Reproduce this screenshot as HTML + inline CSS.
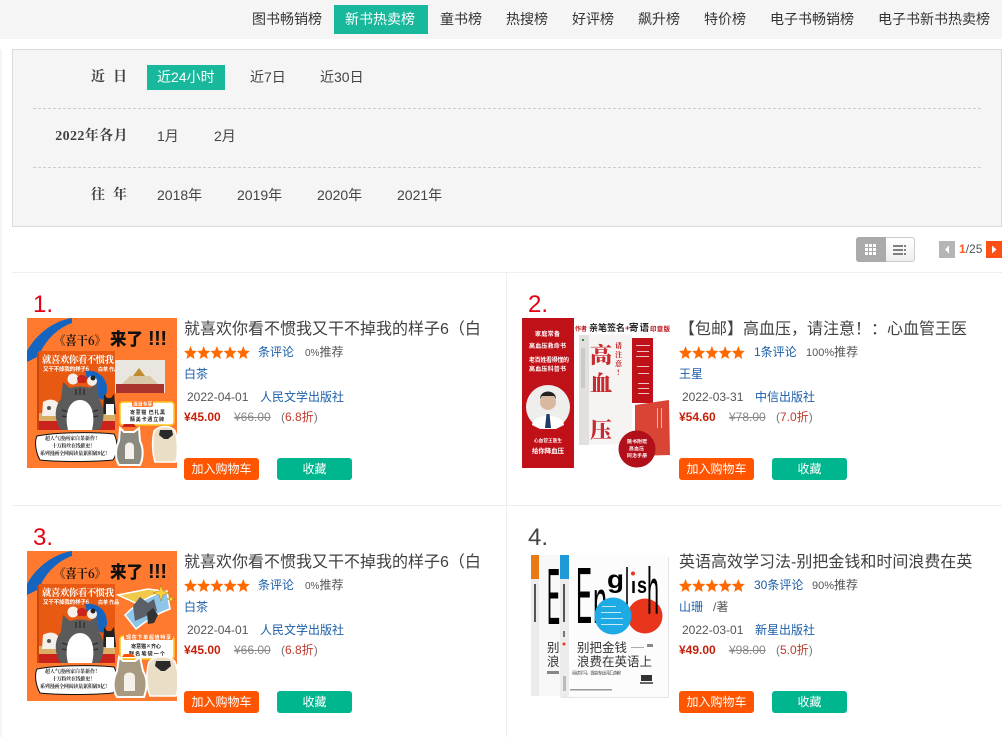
<!DOCTYPE html>
<html lang="zh-CN">
<head>
<meta charset="utf-8">
<title>新书热卖榜</title>
<style>
*{box-sizing:border-box}
html,body{margin:0;padding:0;background:#fff}
body{width:1008px;height:737px;overflow:hidden;position:relative;font-family:"Liberation Sans","WenQuanYi Zen Hei","Noto Sans CJK SC",sans-serif;color:#444}
.a{position:absolute;white-space:nowrap;line-height:20px;height:20px}
.n{font-size:14px;color:#333;top:9px}
.f{font-size:14px;color:#444}
.l{font-family:"Liberation Serif","Noto Serif CJK SC",serif;font-weight:700;font-size:14px;color:#404040;text-align:right;width:100px;left:28px}
.card{position:absolute;width:495px;height:233px}
.rank{font-size:24px;line-height:28px;height:28px;top:291px;left:33px;color:#e60012}
.cover{position:absolute;left:27px;top:318px;width:150px;height:150px;display:block}
.cover text{font-family:"Noto Sans CJK SC",sans-serif}
.cover text.se{font-family:"Noto Serif CJK SC",serif}
.cover text.la{font-family:"Liberation Sans",sans-serif}
.title{left:184px;top:320px;font-size:16px;color:#404040}
.lk{color:#1a5ea8;font-size:12px}
.g{color:#555;font-size:12px}
.stars{position:absolute;left:184px;top:346px;width:66px;height:14px;display:block}
.btn{position:absolute;top:458px;height:22px;width:75px;border-radius:3px;color:#fff;font-size:12px;line-height:22px;text-align:center}
.b1{left:184px;background:#ff5400}
.b2{left:277px;background:#00b68e}
</style>
</head>
<body>
<div style="position:absolute;left:0;top:0;width:1002px;height:39px;background:#f5f5f5"></div>
<div style="position:absolute;left:334px;top:5px;width:94px;height:29px;background:#17b89c"></div>
<div class="a n" style="left:252px">图书畅销榜</div>
<div class="a n" style="left:345px;color:#fff">新书热卖榜</div>
<div class="a n" style="left:440px">童书榜</div>
<div class="a n" style="left:506px">热搜榜</div>
<div class="a n" style="left:572px">好评榜</div>
<div class="a n" style="left:638px">飙升榜</div>
<div class="a n" style="left:704px">特价榜</div>
<div class="a n" style="left:770px">电子书畅销榜</div>
<div class="a n" style="left:878px">电子书新书热卖榜</div>

<div style="position:absolute;left:0;top:49px;width:2px;height:688px;background:#f5f5f5"></div>
<div style="position:absolute;left:12px;top:49px;width:990px;height:178px;background:#f5f5f5;border:1px solid #d9d9d9"></div>
<div style="position:absolute;left:33px;top:108px;width:948px;border-top:1px dashed #ccc"></div>
<div style="position:absolute;left:33px;top:167px;width:948px;border-top:1px dashed #ccc"></div>

<div class="a l" style="top:68px;left:27px;word-spacing:.5px">近&nbsp;&nbsp;日</div>
<div style="position:absolute;left:147px;top:65px;width:78px;height:25px;background:#17b89c"></div>
<div class="a f" style="left:157px;top:67px;color:#fff">近24小时</div>
<div class="a f" style="left:250px;top:67px">近7日</div>
<div class="a f" style="left:320px;top:67px">近30日</div>
<div class="a l" style="top:127px;letter-spacing:.4px">2022年各月</div>
<div class="a f" style="left:157px;top:126px">1月</div>
<div class="a f" style="left:214px;top:126px">2月</div>
<div class="a l" style="top:186px;left:27px;word-spacing:.5px">往&nbsp;&nbsp;年</div>
<div class="a f" style="left:157px;top:185px">2018年</div>
<div class="a f" style="left:237px;top:185px">2019年</div>
<div class="a f" style="left:317px;top:185px">2020年</div>
<div class="a f" style="left:397px;top:185px">2021年</div>

<!-- view toggle -->
<div style="position:absolute;left:856px;top:237px;width:59px;height:25px;border:1px solid #ccc;border-radius:3px;background:linear-gradient(#fff,#eee)"></div>
<div style="position:absolute;left:856px;top:237px;width:30px;height:25px;background:#aaa;border-radius:3px 0 0 3px"></div>
<svg style="position:absolute;left:856px;top:237px" width="59" height="25">
<g fill="#fff"><rect x="9" y="7" width="3" height="3"/><rect x="13" y="7" width="3" height="3"/><rect x="17" y="7" width="3" height="3"/><rect x="9" y="11" width="3" height="3"/><rect x="13" y="11" width="3" height="3"/><rect x="17" y="11" width="3" height="3"/><rect x="9" y="15" width="3" height="3"/><rect x="13" y="15" width="3" height="3"/><rect x="17" y="15" width="3" height="3"/></g>
<g fill="#808080"><rect x="37" y="8" width="10" height="2"/><rect x="48" y="8" width="2" height="2"/><rect x="37" y="12" width="10" height="2"/><rect x="48" y="12" width="2" height="2"/><rect x="37" y="16" width="10" height="2"/><rect x="48" y="16" width="2" height="2"/></g>
</svg>
<!-- pager -->
<svg style="position:absolute;left:939px;top:241px" width="16" height="17"><rect width="16" height="17" fill="#b5b5b5"/><path d="M10 4.5v8l-4-4z" fill="#fff"/></svg>
<div class="a" style="left:959px;top:239px;font-size:12px;color:#555"><b style="color:#ff5a1f;font-weight:700">1</b>/25</div>
<svg style="position:absolute;left:986px;top:241px" width="16" height="17"><rect width="16" height="17" fill="#ff4f14"/><path d="M6 4.5v8l4.5-4z" fill="#fff"/></svg>

<!-- grid lines -->
<div style="position:absolute;left:12px;top:272px;width:990px;border-top:1px solid #eee"></div>
<div style="position:absolute;left:12px;top:505px;width:990px;border-top:1px solid #eee"></div>
<div style="position:absolute;left:506px;top:272px;height:465px;border-left:1px solid #eee"></div>

<!-- Card 1 -->
<div class="card" style="left:0;top:0">
<div class="a rank">1.</div>
<svg class="cover" viewBox="0 0 150 150">
<rect width="150" height="150" fill="#ff7a2e"/>
<path d="M45 0C27 3 10 15 0 33V44L12 38C17 24 30 10 45 5z" fill="#1565c0"/>
<text class="se" x="27" y="27" font-size="12.5" font-weight="700" fill="#111" textLength="52" lengthAdjust="spacingAndGlyphs">《喜干6》</text>
<text x="83" y="27" font-size="17" font-weight="900" fill="#111" textLength="33" lengthAdjust="spacingAndGlyphs">来了</text>
<text class="la" x="121" y="27" font-size="20" font-weight="700" fill="#111" textLength="19">!!!</text>
<rect x="10" y="34" width="3" height="78" fill="#c9470c"/>
<rect x="12" y="33" width="76" height="79" fill="#e85a12"/>
<text class="se" x="15" y="45" font-size="9.5" font-weight="700" fill="#fff" textLength="72">就喜欢你看不惯我</text>
<text x="16" y="53" font-size="5.5" font-weight="700" fill="#fff" textLength="46">又干不掉我的样子6</text>
<text x="71" y="53" font-size="5" font-weight="700" fill="#fff">白茶 作品</text>
<path d="M58 53c12-2 22 6 22 18 0 5-2 9-5 11l-5-3c3-8 0-16-10-18z" fill="#1565c0"/>
<rect x="12" y="95" width="76" height="8" fill="#dbae66"/><rect x="12" y="103" width="76" height="9" fill="#c9231c"/>
<path d="M16 84c6-4 14-3 16 3v11H15z" fill="#f5f0ea"/><circle cx="22" cy="90" r="2" fill="#555"/>
<path d="M77 76l3 4h4l3-4 2 20H76z" fill="#222"/><path d="M79 86h8v11h-8z" fill="#fff"/>
<path d="M36 64l7 6c7-2 14-2 20 0l7-5 2 16c6 8 6 22 0 31H34c-7-9-7-23 0-31z" fill="#5b5b5b"/>
<g stroke="#2c2c2c" stroke-width="1.3" fill="none"><path d="M49 71v6M53 70v7M57 71v6M35 92l6 2M35 98l6 1M71 92l-6 2M71 98l-6 1"/></g>
<path d="M41 112c-4-16 1-30 12-30s16 14 12 30z" fill="#fff"/>
<circle cx="46" cy="61" r="5.5" fill="#f5f0ea"/><path d="M50 60c2-4 8-4 10 0l-1 5h-8z" fill="#c9231c"/><circle cx="65" cy="63" r="5" fill="#f5f0ea"/><circle cx="66" cy="60" r="2.5" fill="#222"/>
<rect x="88" y="42" width="50" height="33" fill="#e9e6df"/>
<rect x="89" y="66" width="48" height="9" fill="#a8322c"/><path d="M95 66l8-8h20l8 8z" fill="#d8c7a8"/><path d="M106 58l6-8 6 8z" fill="#c08a2a"/>
<rect x="93" y="84" width="54" height="23" rx="3" fill="#fff" stroke="#fcc419" stroke-width="1.5"/>
<rect x="105" y="81" width="21" height="8" rx="2" fill="#ff7a2e"/>
<text x="106" y="87.5" font-size="4.8" fill="#fff" font-weight="700">当当专享</text>
<text x="103" y="96" font-size="5" font-weight="700" fill="#222" textLength="35">寄意猫 巴扎黑</text>
<text x="103" y="103" font-size="5" font-weight="700" fill="#222" textLength="34">精美卡通立牌</text>
<path d="M10 118c20-4 58-4 77-2 4 7 4 19-1 26-20 2-55 2-73 0-4-7-6-18-3-24z" fill="#fff" stroke="#111" stroke-width="1"/>
<text class="se" x="18" y="122" font-size="5" font-weight="700" fill="#222" textLength="55">超人气漫画家白茶新作！</text>
<text class="se" x="25" y="129.5" font-size="5" font-weight="700" fill="#222" textLength="43">十万粉丝在线催更！</text>
<text class="se" x="13" y="137" font-size="5" font-weight="700" fill="#222" textLength="70">系列漫画全网阅读量累积破8亿！</text>
<path d="M93 110l4 4 10 0 5-4 1 13c4 8 3 18 0 24H92c-4-6-4-16 0-24z" fill="#8a8a80" stroke="#fff" stroke-width="2"/>
<path d="M98 129c0-6 9-6 9 0v12h-9z" fill="#f5f0ea"/>
<path d="M95 109h14l-2-3h-10z" fill="#c9231c"/>
<path d="M127 113c6-6 17-6 21 0 3 8 3 24 1 31h-21c-3-10-3-22-1-31z" fill="#eadfc6" stroke="#fff" stroke-width="1.5"/>
<path d="M133 112h12l1 5-5 4h-4l-5-4z" fill="#2a2a2a"/>
</svg>
<div class="a title">就喜欢你看不惯我又干不掉我的样子6（白</div>
<svg class="stars" viewBox="0 0 66 14"><g fill="#ff6a00"><polygon points="6.5,0 8.3,4.6 13,5 9.4,8.2 10.5,13 6.5,10.4 2.5,13 3.6,8.2 0,5 4.7,4.6"/><polygon transform="translate(13.2 0)" points="6.5,0 8.3,4.6 13,5 9.4,8.2 10.5,13 6.5,10.4 2.5,13 3.6,8.2 0,5 4.7,4.6"/><polygon transform="translate(26.4 0)" points="6.5,0 8.3,4.6 13,5 9.4,8.2 10.5,13 6.5,10.4 2.5,13 3.6,8.2 0,5 4.7,4.6"/><polygon transform="translate(39.6 0)" points="6.5,0 8.3,4.6 13,5 9.4,8.2 10.5,13 6.5,10.4 2.5,13 3.6,8.2 0,5 4.7,4.6"/><polygon transform="translate(52.8 0)" points="6.5,0 8.3,4.6 13,5 9.4,8.2 10.5,13 6.5,10.4 2.5,13 3.6,8.2 0,5 4.7,4.6"/></g></svg>
<div class="a lk" style="left:258px;top:342px">条评论</div>
<div class="a g" style="left:305px;top:342px"><span style="font-size:10px">0%</span>推荐</div>
<div class="a lk" style="left:184px;top:364px">白茶</div>
<div class="a g" style="left:187px;top:387px">2022-04-01</div>
<div class="a lk" style="left:260px;top:387px">人民文学出版社</div>
<div class="a" style="left:184px;top:407px;font-size:12px;font-weight:700;color:#c7200a">¥45.00</div>
<div class="a" style="left:234px;top:407px;font-size:12px;color:#888;text-decoration:line-through">¥66.00</div>
<div class="a" style="left:281px;top:407px;font-size:12px;color:#777">(<span style="color:#c0392b">6.8折</span>)</div>
<div class="btn b1">加入购物车</div>
<div class="btn b2">收藏</div>
</div>

<!-- Card 2 -->
<div class="card" style="left:495px;top:0">
<div class="a rank">2.</div>
<svg class="cover" viewBox="0 0 150 150">
<rect width="150" height="150" fill="#fff"/>
<rect width="52" height="150" fill="#c01018"/>
<g fill="#fff" font-size="6" font-weight="700">
<text x="13" y="18" textLength="25">家庭常备</text><text x="7" y="30" textLength="37">高血压救命书</text><text x="7" y="44" textLength="40">老百姓看得懂的</text><text x="7" y="53" textLength="37">高血压科普书</text>
<text x="12" y="124" font-size="4.6" textLength="28">心血管王医生</text><text x="10" y="135" font-size="6.5" textLength="32">给你降血压</text></g>
<circle cx="26" cy="89" r="22" fill="#eeeeec"/><circle cx="26" cy="84" r="8" fill="#d9b8a0"/><path d="M18 81c0-10 16-10 16 0l-2-3H20z" fill="#222"/>
<path d="M10 107c1-12 31-12 32 0l-8 4H18z" fill="#fff"/><path d="M24.5 96h3l1.500 14h-6z" fill="#1e3a66"/>
<text x="53" y="13" font-size="6" font-weight="700" fill="#c01018" textLength="12">作者</text>
<text x="67" y="13" font-size="9" font-weight="700" fill="#222" textLength="36">亲笔签名</text>
<text x="103" y="13" font-size="8" font-weight="700" fill="#c01018">+</text>
<text x="107" y="13" font-size="9.5" font-weight="700" fill="#222" textLength="20">寄语</text>
<text x="128" y="13" font-size="6.5" font-weight="700" fill="#c01018" textLength="20">印章版</text>
<path d="M57 17l53-1v110l-53 1z" fill="#f6f4f2"/><path d="M57 17h10v110H57z" fill="#e2e0de"/>
<rect x="60" y="21" width="2" height="2" fill="#2a8a3a"/><rect x="59" y="30" width="4" height="40" fill="#bbb" opacity=".6"/>
<g fill="#c01018" font-weight="900" opacity=".88"><text class="se" x="68" y="45" font-size="22">高</text><text class="se" x="68" y="73" font-size="22">血</text><text class="se" x="68" y="120" font-size="22">压</text></g>
<g fill="#c01018" font-size="7" font-weight="700"><text class="se" x="93" y="30">请</text><text class="se" x="93" y="39">注</text><text class="se" x="93" y="48">意</text><text class="se" x="95" y="57">!</text></g>
<rect x="110" y="20" width="21" height="65" fill="#c01018"/>
<g fill="#fff" opacity=".75"><rect x="114" y="27" width="14" height="1"/><rect x="115" y="33" width="12" height="1"/><rect x="114" y="38" width="13" height="1"/><rect x="115" y="48" width="12" height="1"/><rect x="116" y="55" width="11" height="1"/><rect x="116" y="65" width="11" height="1"/><rect x="116" y="70" width="11" height="1"/><rect x="116" y="75" width="11" height="1"/></g>
<path d="M113 87l34-5 1 55-35 1z" fill="#d84535"/>
<g fill="#fff" opacity=".6"><rect x="139" y="90" width="1" height="20"/><rect x="135" y="90" width="1" height="20"/></g>
<circle cx="115" cy="131" r="18.5" fill="#b10f1a"/>
<g fill="#fff" font-size="4.8" font-weight="700"><text x="105" y="125" textLength="20">随书附赠</text><text x="107" y="132" textLength="15">高血压</text><text x="105" y="139" textLength="20">同治手册</text></g>
</svg>
<div class="a title">【包邮】高血压，请注意！：心血管王医</div>
<svg class="stars" viewBox="0 0 66 14"><g fill="#ff6a00"><polygon points="6.5,0 8.3,4.6 13,5 9.4,8.2 10.5,13 6.5,10.4 2.5,13 3.6,8.2 0,5 4.7,4.6"/><polygon transform="translate(13.2 0)" points="6.5,0 8.3,4.6 13,5 9.4,8.2 10.5,13 6.5,10.4 2.5,13 3.6,8.2 0,5 4.7,4.6"/><polygon transform="translate(26.4 0)" points="6.5,0 8.3,4.6 13,5 9.4,8.2 10.5,13 6.5,10.4 2.5,13 3.6,8.2 0,5 4.7,4.6"/><polygon transform="translate(39.6 0)" points="6.5,0 8.3,4.6 13,5 9.4,8.2 10.5,13 6.5,10.4 2.5,13 3.6,8.2 0,5 4.7,4.6"/><polygon transform="translate(52.8 0)" points="6.5,0 8.3,4.6 13,5 9.4,8.2 10.5,13 6.5,10.4 2.5,13 3.6,8.2 0,5 4.7,4.6"/></g></svg>
<div class="a lk" style="left:259px;top:342px">1条评论</div>
<div class="a g" style="left:311px;top:342px"><span style="font-size:11px">100%</span>推荐</div>
<div class="a lk" style="left:184px;top:364px">王星</div>
<div class="a g" style="left:187px;top:387px">2022-03-31</div>
<div class="a lk" style="left:260px;top:387px">中信出版社</div>
<div class="a" style="left:184px;top:407px;font-size:12px;font-weight:700;color:#c7200a">¥54.60</div>
<div class="a" style="left:234px;top:407px;font-size:12px;color:#888;text-decoration:line-through">¥78.00</div>
<div class="a" style="left:281px;top:407px;font-size:12px;color:#777">(<span style="color:#c0392b">7.0折</span>)</div>
<div class="btn b1">加入购物车</div>
<div class="btn b2">收藏</div>
</div>

<!-- Card 3 -->
<div class="card" style="left:0;top:233px">
<div class="a rank">3.</div>
<svg class="cover" viewBox="0 0 150 150">
<rect width="150" height="150" fill="#ff7a2e"/>
<path d="M45 0C27 3 10 15 0 33V44L12 38C17 24 30 10 45 5z" fill="#1565c0"/>
<text class="se" x="27" y="27" font-size="12.5" font-weight="700" fill="#111" textLength="52" lengthAdjust="spacingAndGlyphs">《喜干6》</text>
<text x="83" y="27" font-size="17" font-weight="900" fill="#111" textLength="33" lengthAdjust="spacingAndGlyphs">来了</text>
<text class="la" x="121" y="27" font-size="20" font-weight="700" fill="#111" textLength="19">!!!</text>
<rect x="10" y="34" width="3" height="78" fill="#c9470c"/>
<rect x="12" y="33" width="76" height="79" fill="#e85a12"/>
<text class="se" x="15" y="45" font-size="9.5" font-weight="700" fill="#fff" textLength="72">就喜欢你看不惯我</text>
<text x="16" y="53" font-size="5.5" font-weight="700" fill="#fff" textLength="46">又干不掉我的样子6</text>
<text x="71" y="53" font-size="5" font-weight="700" fill="#fff">白茶 作品</text>
<path d="M58 53c12-2 22 6 22 18 0 5-2 9-5 11l-5-3c3-8 0-16-10-18z" fill="#1565c0"/>
<rect x="12" y="95" width="76" height="8" fill="#dbae66"/><rect x="12" y="103" width="76" height="9" fill="#c9231c"/>
<path d="M16 84c6-4 14-3 16 3v11H15z" fill="#f5f0ea"/><circle cx="22" cy="90" r="2" fill="#555"/>
<path d="M77 76l3 4h4l3-4 2 20H76z" fill="#222"/><path d="M79 86h8v11h-8z" fill="#fff"/>
<path d="M36 64l7 6c7-2 14-2 20 0l7-5 2 16c6 8 6 22 0 31H34c-7-9-7-23 0-31z" fill="#5b5b5b"/>
<g stroke="#2c2c2c" stroke-width="1.3" fill="none"><path d="M49 71v6M53 70v7M57 71v6M35 92l6 2M35 98l6 1M71 92l-6 2M71 98l-6 1"/></g>
<path d="M41 112c-4-16 1-30 12-30s16 14 12 30z" fill="#fff"/>
<circle cx="46" cy="61" r="5.5" fill="#f5f0ea"/><path d="M50 60c2-4 8-4 10 0l-1 5h-8z" fill="#c9231c"/><circle cx="65" cy="63" r="5" fill="#f5f0ea"/><circle cx="66" cy="60" r="2.5" fill="#222"/>
<path d="M91 44l30-6 15 2 2 16-14 3z" fill="#f0c84a" stroke="#fff" stroke-width="1.5"/>
<path d="M98 64c14-14 26-20 42-24l3 18c-12 4-24 12-34 20z" fill="#8fc6e8" stroke="#fff" stroke-width="1.5"/>
<path d="M106 55l7-9 8 6 6-4 3 12-13 6-9 4z" fill="#5a5f68"/>
<path d="M120 62l6-5 5 7-4 8-6 1z" fill="#333"/>
<path d="M134 34l2 6 6 2-6 2-2 6-2-6-6-2 6-2zM144 44l1 3 3 1-3 1-1 3-1-3-3-1 3-1z" fill="#ffcf3d" stroke="#8a6d00" stroke-width=".4"/>
<rect x="93" y="85" width="54" height="23" rx="3" fill="#fff" stroke="#fcc419" stroke-width="1.5"/>
<rect x="97" y="82" width="49" height="7" rx="2" fill="#ff7a2e"/>
<text x="99" y="87.8" font-size="5" fill="#fff" font-weight="700" textLength="45">现在下单超值特享</text>
<text x="104" y="97" font-size="5.2" font-weight="700" fill="#222" textLength="30">寄意猫×齐心</text>
<text x="102" y="104.5" font-size="5.2" font-weight="700" fill="#222" textLength="36">联名笔袋一个</text>
<path d="M10 118c20-4 58-4 77-2 4 7 4 19-1 26-20 2-55 2-73 0-4-7-6-18-3-24z" fill="#fff" stroke="#111" stroke-width="1"/>
<text class="se" x="18" y="122" font-size="5" font-weight="700" fill="#222" textLength="55">超人气漫画家白茶新作！</text>
<text class="se" x="25" y="129.5" font-size="5" font-weight="700" fill="#222" textLength="43">十万粉丝在线催更！</text>
<text class="se" x="13" y="137" font-size="5" font-weight="700" fill="#222" textLength="70">系列漫画全网阅读量累积破8亿！</text>
<path d="M92 106l4 4 12 0 5-4 3 14c5 8 4 18 1 26H90c-5-8-4-18 0-26z" fill="#a89a80" stroke="#fff" stroke-width="2"/>
<path d="M97 126c0-6 11-6 11 0v14H97z" fill="#f5f0ea"/>
<path d="M95 106h13l-2-3h-9z" fill="#ff5400"/>
<path d="M122 111c6-7 21-7 26 0 4 9 4 26 1 34h-26c-4-11-4-24-1-34z" fill="#eadfc6" stroke="#fff" stroke-width="1.5"/>
<path d="M129 110h14l1 5-6 5h-4l-6-5z" fill="#2a2a2a"/>
</svg>
<div class="a title">就喜欢你看不惯我又干不掉我的样子6（白</div>
<svg class="stars" viewBox="0 0 66 14"><g fill="#ff6a00"><polygon points="6.5,0 8.3,4.6 13,5 9.4,8.2 10.5,13 6.5,10.4 2.5,13 3.6,8.2 0,5 4.7,4.6"/><polygon transform="translate(13.2 0)" points="6.5,0 8.3,4.6 13,5 9.4,8.2 10.5,13 6.5,10.4 2.5,13 3.6,8.2 0,5 4.7,4.6"/><polygon transform="translate(26.4 0)" points="6.5,0 8.3,4.6 13,5 9.4,8.2 10.5,13 6.5,10.4 2.5,13 3.6,8.2 0,5 4.7,4.6"/><polygon transform="translate(39.6 0)" points="6.5,0 8.3,4.6 13,5 9.4,8.2 10.5,13 6.5,10.4 2.5,13 3.6,8.2 0,5 4.7,4.6"/><polygon transform="translate(52.8 0)" points="6.5,0 8.3,4.6 13,5 9.4,8.2 10.5,13 6.5,10.4 2.5,13 3.6,8.2 0,5 4.7,4.6"/></g></svg>
<div class="a lk" style="left:258px;top:342px">条评论</div>
<div class="a g" style="left:305px;top:342px"><span style="font-size:10px">0%</span>推荐</div>
<div class="a lk" style="left:184px;top:364px">白茶</div>
<div class="a g" style="left:187px;top:387px">2022-04-01</div>
<div class="a lk" style="left:260px;top:387px">人民文学出版社</div>
<div class="a" style="left:184px;top:407px;font-size:12px;font-weight:700;color:#c7200a">¥45.00</div>
<div class="a" style="left:234px;top:407px;font-size:12px;color:#888;text-decoration:line-through">¥66.00</div>
<div class="a" style="left:281px;top:407px;font-size:12px;color:#777">(<span style="color:#c0392b">6.8折</span>)</div>
<div class="btn b1">加入购物车</div>
<div class="btn b2">收藏</div>
</div>

<!-- Card 4 -->
<div class="card" style="left:495px;top:233px">
<div class="a rank" style="color:#444">4.</div>
<svg class="cover" viewBox="0 0 150 150">
<rect width="150" height="150" fill="#fff"/>
<rect x="9" y="4" width="32" height="141" fill="#f8f8f8"/>
<rect x="9" y="4" width="8" height="141" fill="#ececec"/><rect x="9" y="4" width="8" height="24" fill="#e87a16"/>
<rect x="12" y="33" width="2" height="38" fill="#555"/>
<text class="la" x="25" y="73" font-size="80" fill="#000" textLength="13" lengthAdjust="spacingAndGlyphs">E</text>
<text x="25" y="101" font-size="12.5" fill="#333">别</text>
<text x="25" y="115" font-size="12.5" fill="#333">浪</text>
<rect x="25" y="120" width="12" height="3" fill="#888"/>
<rect x="39" y="6" width="108" height="141" fill="#e4e4e4"/>
<rect x="38" y="4" width="108" height="142" fill="#fcfcfc"/>
<rect x="38" y="4" width="9" height="142" fill="#ececec"/><rect x="38" y="4" width="9" height="24" fill="#1f9ad6"/>
<rect x="41" y="33" width="2" height="38" fill="#555"/><rect x="41" y="80" width="2" height="6" fill="#777"/>
<circle cx="42" cy="93" r="1.5" fill="#e8351c"/>
<rect x="41" y="125" width="3" height="15" fill="#bbb"/>
<text class="la" x="54" y="72" font-size="80" fill="#000" textLength="16" lengthAdjust="spacingAndGlyphs">E</text>
<text class="la" x="71" y="72" font-size="62" fill="#000" textLength="14" lengthAdjust="spacingAndGlyphs">n</text>
<text class="la" x="85" y="37" font-size="25" font-weight="700" fill="#000" textLength="17" lengthAdjust="spacingAndGlyphs">g</text>
<text class="la" x="103" y="55" font-size="54" fill="#000" textLength="4" lengthAdjust="spacingAndGlyphs">l</text>
<text class="la" x="109" y="42" font-size="22" font-weight="700" fill="#000" textLength="5" lengthAdjust="spacingAndGlyphs">ı</text>
<circle cx="111" cy="22.5" r="2" fill="#e8351c"/>
<text class="la" x="115" y="42" font-size="23" font-weight="700" fill="#000" textLength="10" lengthAdjust="spacingAndGlyphs">s</text>
<circle cx="123" cy="65" r="17.5" fill="#e8351c"/>
<text class="la" x="125" y="63" font-size="66" fill="#000" textLength="12" lengthAdjust="spacingAndGlyphs">h</text>
<circle cx="91" cy="65" r="18.5" fill="#1eaae4"/>
<g fill="#fff" opacity=".75"><rect x="80" y="55" width="14" height="1"/><rect x="79" y="61" width="20" height="1"/><rect x="79" y="67" width="22" height="1"/><rect x="79" y="73" width="22" height="1"/></g>
<text x="55" y="101" font-size="12.5" fill="#333">别把金钱</text>
<text x="55" y="115" font-size="12.5" fill="#333">浪费在英语上</text>
<rect x="109" y="96" width="13" height="1" fill="#aaa"/><rect x="125" y="93" width="6" height="3" fill="#888"/>
<text x="50" y="123.5" font-size="4.5" fill="#444" textLength="52">阅读学习，提高专业词汇读者！</text>
<rect x="119" y="124" width="11" height="6" fill="#333"/><rect x="118" y="131" width="13" height="2" fill="#666"/>
<rect x="48" y="138" width="42" height="1.5" fill="#999"/>
</svg>
<div class="a title">英语高效学习法-别把金钱和时间浪费在英</div>
<svg class="stars" viewBox="0 0 66 14"><g fill="#ff6a00"><polygon points="6.5,0 8.3,4.6 13,5 9.4,8.2 10.5,13 6.5,10.4 2.5,13 3.6,8.2 0,5 4.7,4.6"/><polygon transform="translate(13.2 0)" points="6.5,0 8.3,4.6 13,5 9.4,8.2 10.5,13 6.5,10.4 2.5,13 3.6,8.2 0,5 4.7,4.6"/><polygon transform="translate(26.4 0)" points="6.5,0 8.3,4.6 13,5 9.4,8.2 10.5,13 6.5,10.4 2.5,13 3.6,8.2 0,5 4.7,4.6"/><polygon transform="translate(39.6 0)" points="6.5,0 8.3,4.6 13,5 9.4,8.2 10.5,13 6.5,10.4 2.5,13 3.6,8.2 0,5 4.7,4.6"/><polygon transform="translate(52.8 0)" points="6.5,0 8.3,4.6 13,5 9.4,8.2 10.5,13 6.5,10.4 2.5,13 3.6,8.2 0,5 4.7,4.6"/></g></svg>
<div class="a lk" style="left:259px;top:342px">30条评论</div>
<div class="a g" style="left:317px;top:342px"><span style="font-size:11px">90%</span>推荐</div>
<div class="a lk" style="left:184px;top:364px">山珊</div>
<div class="a g" style="left:218px;top:364px">/著</div>
<div class="a g" style="left:187px;top:387px">2022-03-01</div>
<div class="a lk" style="left:260px;top:387px">新星出版社</div>
<div class="a" style="left:184px;top:407px;font-size:12px;font-weight:700;color:#c7200a">¥49.00</div>
<div class="a" style="left:234px;top:407px;font-size:12px;color:#888;text-decoration:line-through">¥98.00</div>
<div class="a" style="left:281px;top:407px;font-size:12px;color:#777">(<span style="color:#c0392b">5.0折</span>)</div>
<div class="btn b1">加入购物车</div>
<div class="btn b2">收藏</div>
</div>
</body>
</html>
